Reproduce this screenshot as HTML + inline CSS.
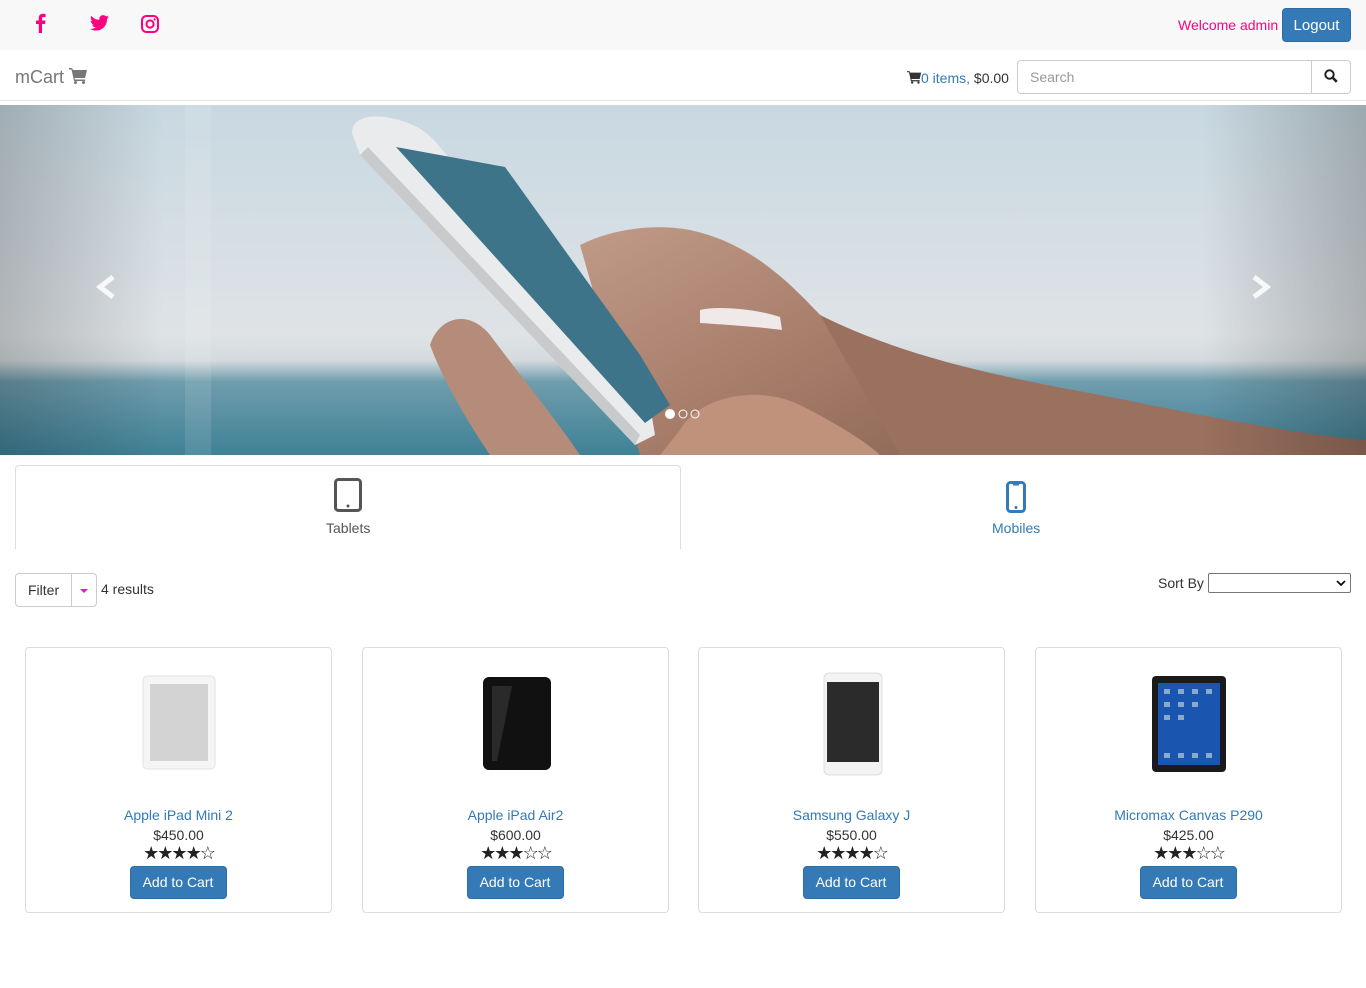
<!DOCTYPE html>
<html><head><meta charset="utf-8"><style>
*{box-sizing:border-box;margin:0;padding:0}
body{width:1366px;height:988px;font-family:"Liberation Sans",sans-serif;font-size:14px;color:#333;background:#fff;position:relative;overflow:hidden}
.abs{position:absolute}
.top{left:0;top:0;width:1366px;height:50px;background:#f8f8f8}
.nav{left:0;top:50px;width:1366px;height:51px;border-bottom:1px solid #e7e7e7;background:#fff}
.btn{background:#337ab7;color:#fff;border-radius:4px;border:1px solid #2e6da4;text-align:center;font-size:14px}
.card{border:1px solid #ddd;border-radius:4px;width:307px;height:266px;top:647px}
.card .n{position:absolute;top:159px;width:100%;text-align:center;color:#337ab7}
.card .p{position:absolute;top:179px;width:100%;text-align:center}
.card .s{position:absolute;top:195px;width:100%;text-align:center;font-size:18px;letter-spacing:-2px;color:#222}
.card .b{position:absolute;top:218px;left:50%;margin-left:-49px;width:97px;height:33px;line-height:31px}
</style></head><body>
<div class="abs top"></div>
<svg class="abs" style="left:34px;top:13px" width="12" height="20" viewBox="0 0 12 20"><path d="M8 20V11h3l.5-3.5H8V5.5C8 4.5 8.3 4 9.6 4H11.6V1C11 .9 10 .8 8.9.8 6.5.8 4.8 2.3 4.8 5V7.5H2V11h2.8v9z" fill="#ff0080"/></svg>
<svg class="abs" style="left:90px;top:15px" width="19" height="16" viewBox="0 0 24 20"><path d="M24 2.4c-.9.4-1.8.6-2.8.8 1-.6 1.8-1.600 2.2-2.7-1 .6-2 1-3.1 1.2C19.4.7 18.1.1 16.6.1c-2.7 0-4.9 2.2-4.9 4.9 0 .4 0 .8.1 1.1C7.7 5.9 4.1 4 1.7 1 1.2 1.7 1 2.6 1 3.5c0 1.7.9 3.2 2.2 4.1-.8 0-1.6-.2-2.2-.6v.1c0 2.4 1.7 4.4 3.9 4.8-.4.1-.8.2-1.3.2-.3 0-.6 0-.9-.1.6 2 2.4 3.4 4.6 3.4-1.7 1.3-3.8 2.1-6.1 2.1-.4 0-.8 0-1.2-.1 2.2 1.4 4.8 2.2 7.5 2.2 9.1 0 14-7.5 14-14v-.6c1-.7 1.8-1.6 2.5-2.6z" fill="#ff0080"/></svg>
<svg class="abs" style="left:141px;top:15px" width="18" height="18" viewBox="0 0 18 18"><rect x="1" y="1" width="16" height="16" rx="4.5" fill="none" stroke="#ff0080" stroke-width="2"/><circle cx="9" cy="9" r="3.6" fill="none" stroke="#ff0080" stroke-width="2"/><circle cx="13.6" cy="4.4" r="1.1" fill="#ff0080"/></svg>
<div class="abs" style="left:1178px;top:17px;color:#ff0080;font-size:14px">Welcome admin</div>
<div class="abs btn" style="left:1282px;top:8px;width:69px;height:34px;line-height:33px;font-size:15px">Logout</div>
<div class="abs nav"></div>
<div class="abs" style="left:15px;top:67px;font-size:18px;color:#777">mCart</div>
<svg class="abs" style="left:69px;top:67px" width="19" height="17" viewBox="0 0 19 17"><path d="M0 1h3l1 2h14l-2 8H5.5L6 12.5h10V14H5L2.5 2.5H0z" fill="#777"/><circle cx="6.5" cy="15.5" r="1.5" fill="#777"/><circle cx="14.5" cy="15.5" r="1.5" fill="#777"/></svg>
<svg class="abs" style="left:907px;top:70px" width="15" height="14" viewBox="0 0 19 17"><path d="M0 1h3l1 2h14l-2 8H5.5L6 12.5h10V14H5L2.5 2.5H0z" fill="#333"/><circle cx="6.5" cy="15.5" r="1.5" fill="#333"/><circle cx="14.5" cy="15.5" r="1.5" fill="#333"/></svg>
<div class="abs" style="left:921px;top:70px;color:#337ab7">0 items, <span style="color:#333">$0.00</span></div>
<div class="abs" style="left:1017px;top:60px;width:334px;height:34px;border:1px solid #ccc;border-radius:4px"></div>
<div class="abs" style="left:1311px;top:60px;width:1px;height:34px;background:#ccc"></div>
<div class="abs" style="left:1030px;top:69px;color:#999">Search</div>
<svg class="abs" style="left:1324px;top:69px" width="14" height="14" viewBox="0 0 14 14"><circle cx="5.5" cy="5.5" r="4.2" fill="none" stroke="#222" stroke-width="2"/><path d="M8.5 8.5l4.3 4.3" stroke="#222" stroke-width="2.6"/></svg>
<svg class="abs" style="left:0;top:105px" width="1366" height="350" viewBox="0 0 1366 350">
<defs>
<linearGradient id="sky" x1="0" y1="0" x2="0" y2="1"><stop offset="0" stop-color="#c8d8e1"/><stop offset=".66" stop-color="#dfe3e6"/><stop offset=".73" stop-color="#d4dadd"/><stop offset=".79" stop-color="#6f9dad"/><stop offset="1" stop-color="#3f8196"/></linearGradient>
<linearGradient id="sh" x1="0" x2="1"><stop offset="0" stop-color="#000" stop-opacity=".2"/><stop offset=".12" stop-color="#000" stop-opacity="0"/><stop offset=".88" stop-color="#000" stop-opacity="0"/><stop offset="1" stop-color="#000" stop-opacity=".22"/></linearGradient>
<linearGradient id="skin" x1="0" y1="0" x2="1" y2="1"><stop offset="0" stop-color="#c09a88"/><stop offset=".5" stop-color="#a97f6c"/><stop offset="1" stop-color="#8c6555"/></linearGradient>
</defs>
<rect width="1366" height="350" fill="url(#sky)"/>
<rect x="185" y="0" width="26" height="350" fill="#fff" opacity=".1"/>
<path d="M580 140 C610 125 650 118 690 125 C760 140 800 190 830 220 C880 270 930 310 1000 350 L640 350 Z" fill="url(#skin)"/>
<path d="M820 210 C900 250 990 270 1100 290 C1200 310 1300 330 1366 335 L1366 350 L900 350 Z" fill="#9a705e"/>
<path d="M430 240 C440 210 470 205 490 230 C520 270 560 320 580 350 L490 350 C470 320 445 280 430 240Z" fill="#b58c79"/>
<path d="M680 325 C700 290 760 280 800 300 C840 320 870 340 880 350 L660 350Z" fill="#c0917b"/>
<path d="M352 28 C352 12 372 8 395 14 C420 20 430 30 440 42 L650 300 L655 330 L635 340 L360 50 Z" fill="#e9ebed"/>
<path d="M396 42 L505 62 L640 250 L670 300 L645 318 Z" fill="#3d7489"/>
<path d="M360 50 L635 340 L640 330 L368 42Z" fill="#c8cacc"/>
<path d="M700 205 C720 200 760 205 780 212 L782 225 C760 222 730 220 700 218Z" fill="#f0e9ea"/>
<rect width="1366" height="350" fill="url(#sh)"/>
<path d="M113 172 L100 182 L113 192" fill="none" stroke="#fff" stroke-width="5" opacity=".85"/>
<path d="M1254 172 L1267 182 L1254 192" fill="none" stroke="#fff" stroke-width="5" opacity=".85"/>
<circle cx="670" cy="309" r="5" fill="#fff"/>
<circle cx="683" cy="309" r="4" fill="none" stroke="#fff"/>
<circle cx="695" cy="309" r="4" fill="none" stroke="#fff"/>
</svg>
<div class="abs" style="left:15px;top:465px;width:666px;height:84px;border:1px solid #ddd;border-bottom:none;border-radius:4px 4px 0 0"></div>
<svg class="abs" style="left:334px;top:478px" width="28" height="34" viewBox="0 0 28 34"><rect x="1.5" y="1.5" width="25" height="31" rx="3" fill="none" stroke="#555" stroke-width="3"/><circle cx="14" cy="28" r="1.5" fill="#555"/></svg>
<div class="abs" style="left:326px;top:520px;color:#555">Tablets</div>
<svg class="abs" style="left:1006px;top:481px" width="20" height="32" viewBox="0 0 20 32"><rect x="1.5" y="1.5" width="17" height="29" rx="3" fill="none" stroke="#337ab7" stroke-width="3"/><rect x="7" y="3" width="6" height="1.5" fill="#337ab7"/><circle cx="10" cy="26.5" r="1.5" fill="#337ab7"/></svg>
<div class="abs" style="left:992px;top:520px;color:#337ab7">Mobiles</div>
<div class="abs" style="left:15px;top:573px;width:82px;height:34px;border:1px solid #ccc;border-radius:4px"></div>
<div class="abs" style="left:71px;top:573px;width:1px;height:34px;background:#ccc"></div>
<div class="abs" style="left:28px;top:582px">Filter</div>
<div class="abs" style="left:80px;top:589px;width:0;height:0;border-left:4px solid transparent;border-right:4px solid transparent;border-top:4px solid #f0f"></div>
<div class="abs" style="left:101px;top:581px">4 results</div>
<div class="abs" style="left:1158px;top:575px">Sort By</div>
<div class="abs" style="left:1208px;top:573px;width:143px;height:20px;border:1px solid #767676;border-radius:2px"></div>
<svg class="abs" style="left:1336px;top:579px" width="10" height="8" viewBox="0 0 10 8"><path d="M1 2l4 4 4-4" fill="none" stroke="#000" stroke-width="1.6"/></svg>

<div class="abs card" style="left:25px"><svg style="position:absolute;left:116px;top:27px" width="74" height="96" viewBox="0 0 74 96"><rect x="1" y="1" width="72" height="93" rx="4" fill="#f5f5f5" stroke="#e2e2e2"/><rect x="8" y="9" width="58" height="77" fill="#d3d3d3"/></svg><div class="n">Apple iPad Mini 2</div><div class="p">$450.00</div><div class="s">★★★★☆</div><div class="btn b">Add to Cart</div></div>
<div class="abs card" style="left:362px"><svg style="position:absolute;left:119px;top:28px" width="70" height="95" viewBox="0 0 70 95"><rect x="1" y="1" width="68" height="93" rx="6" fill="#111"/><path d="M10 10 L30 10 L15 85 L10 85Z" fill="#2a2a2a"/></svg><div class="n">Apple iPad Air2</div><div class="p">$600.00</div><div class="s">★★★☆☆</div><div class="btn b">Add to Cart</div></div>
<div class="abs card" style="left:698px"><svg style="position:absolute;left:124px;top:24px" width="60" height="104" viewBox="0 0 60 104"><rect x="1" y="1" width="58" height="102" rx="5" fill="#f3f3f3" stroke="#ddd"/><rect x="4" y="10" width="52" height="80" fill="#2b2b2b"/></svg><div class="n">Samsung Galaxy J</div><div class="p">$550.00</div><div class="s">★★★★☆</div><div class="btn b">Add to Cart</div></div>
<div class="abs card" style="left:1035px"><svg style="position:absolute;left:115px;top:27px" width="76" height="98" viewBox="0 0 76 98"><rect x="1" y="1" width="74" height="96" rx="4" fill="#1a1a1a"/><rect x="7" y="8" width="62" height="82" fill="#1a56b0"/><g fill="#8ac"><rect x="13" y="14" width="6" height="5"/><rect x="27" y="14" width="6" height="5"/><rect x="41" y="14" width="6" height="5"/><rect x="55" y="14" width="6" height="5"/><rect x="13" y="27" width="6" height="5"/><rect x="27" y="27" width="6" height="5"/><rect x="41" y="27" width="6" height="5"/><rect x="13" y="40" width="6" height="5"/><rect x="27" y="40" width="6" height="5"/><rect x="13" y="78" width="6" height="5"/><rect x="27" y="78" width="6" height="5"/><rect x="41" y="78" width="6" height="5"/><rect x="55" y="78" width="6" height="5"/></g></svg><div class="n">Micromax Canvas P290</div><div class="p">$425.00</div><div class="s">★★★☆☆</div><div class="btn b">Add to Cart</div></div>
</body></html>
